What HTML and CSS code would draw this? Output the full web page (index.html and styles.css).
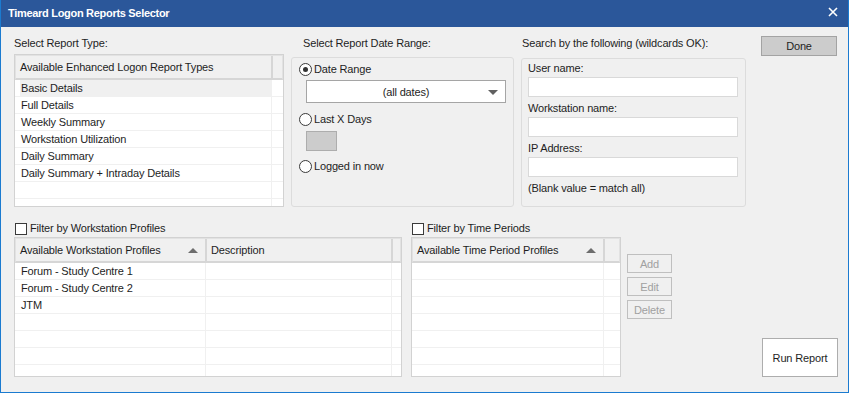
FILE: index.html
```html
<!DOCTYPE html>
<html lang="en">
<head>
    <meta charset="UTF-8">
    <title>Timeard Logon Reports Selector</title>
    <link rel="stylesheet" href="styles.css">
</head>
<body>
    <div class="window">
        <div class="titlebar">
            <span class="title">Timeard Logon Reports Selector</span>
            <svg class="close" width="10" height="10" viewBox="0 0 10 10">
                <path d="M1 1 L9 9 M9 1 L1 9" stroke="#ffffff" stroke-width="1.6" fill="none"/>
            </svg>
        </div>

        <div class="content">
            <div class="top-row">
                <!-- report type -->
                <div class="report-type">
                    <div class="label">Select Report Type:</div>
                    <div class="listview types">
                        <div class="lv-header">
                            <div class="hcell c-type">Available Enhanced Logon Report Types</div>
                            <div class="hcell filler"></div>
                        </div>
                        <div class="lv-row selected"><div class="cell c-type">Basic Details</div><div class="cell filler"></div></div>
                        <div class="lv-row"><div class="cell c-type">Full Details</div><div class="cell filler"></div></div>
                        <div class="lv-row"><div class="cell c-type">Weekly Summary</div><div class="cell filler"></div></div>
                        <div class="lv-row"><div class="cell c-type">Workstation Utilization</div><div class="cell filler"></div></div>
                        <div class="lv-row"><div class="cell c-type">Daily Summary</div><div class="cell filler"></div></div>
                        <div class="lv-row"><div class="cell c-type">Daily Summary + Intraday Details</div><div class="cell filler"></div></div>
                        <div class="lv-row"><div class="cell c-type"></div><div class="cell filler"></div></div>
                        <div class="lv-row"><div class="cell c-type"></div><div class="cell filler"></div></div>
                    </div>
                </div>

                <!-- date range -->
                <div class="date-range">
                    <div class="label indent">Select Report Date Range:</div>
                    <div class="group date-group">
                        <label class="radio-row">
                            <span class="radio checked"></span>
                            <span>Date Range</span>
                        </label>
                        <div class="dropdown">
                            <span>(all dates)</span>
                            <span class="arrow"></span>
                        </div>
                        <label class="radio-row second">
                            <span class="radio"></span>
                            <span>Last X Days</span>
                        </label>
                        <div class="days-box"></div>
                        <label class="radio-row third">
                            <span class="radio"></span>
                            <span>Logged in now</span>
                        </label>
                    </div>
                </div>

                <!-- search -->
                <div class="search">
                    <div class="label tiny-indent">Search by the following (wildcards OK):</div>
                    <div class="group search-group">
                        <div class="field-label">User name:</div>
                        <div class="textbox"></div>
                        <div class="field-label">Workstation name:</div>
                        <div class="textbox"></div>
                        <div class="field-label">IP Address:</div>
                        <div class="textbox"></div>
                        <div class="field-label">(Blank value = match all)</div>
                    </div>
                </div>

                <button type="button" class="btn done">Done</button>
            </div>

            <div class="bottom-row">
                <!-- workstation profiles -->
                <div class="ws-profiles">
                    <label class="check-row">
                        <span class="checkbox"></span>
                        <span>Filter by Workstation Profiles</span>
                    </label>
                    <div class="listview ws">
                        <div class="lv-header">
                            <div class="hcell c-ws">Available Workstation Profiles<span class="sort"></span></div>
                            <div class="hcell c-desc">Description</div>
                            <div class="hcell filler"></div>
                        </div>
                        <div class="lv-row"><div class="cell c-ws">Forum - Study Centre 1</div><div class="cell c-desc"></div><div class="cell filler"></div></div>
                        <div class="lv-row"><div class="cell c-ws">Forum - Study Centre 2</div><div class="cell c-desc"></div><div class="cell filler"></div></div>
                        <div class="lv-row"><div class="cell c-ws">JTM</div><div class="cell c-desc"></div><div class="cell filler"></div></div>
                        <div class="lv-row"><div class="cell c-ws"></div><div class="cell c-desc"></div><div class="cell filler"></div></div>
                        <div class="lv-row"><div class="cell c-ws"></div><div class="cell c-desc"></div><div class="cell filler"></div></div>
                        <div class="lv-row"><div class="cell c-ws"></div><div class="cell c-desc"></div><div class="cell filler"></div></div>
                        <div class="lv-row"><div class="cell c-ws"></div><div class="cell c-desc"></div><div class="cell filler"></div></div>
                    </div>
                </div>

                <!-- time periods -->
                <div class="time-profiles">
                    <label class="check-row">
                        <span class="checkbox"></span>
                        <span>Filter by Time Periods</span>
                    </label>
                    <div class="listview tp">
                        <div class="lv-header">
                            <div class="hcell c-tp">Available Time Period Profiles<span class="sort"></span></div>
                            <div class="hcell filler"></div>
                        </div>
                        <div class="lv-row"><div class="cell c-tp"></div><div class="cell filler"></div></div>
                        <div class="lv-row"><div class="cell c-tp"></div><div class="cell filler"></div></div>
                        <div class="lv-row"><div class="cell c-tp"></div><div class="cell filler"></div></div>
                        <div class="lv-row"><div class="cell c-tp"></div><div class="cell filler"></div></div>
                        <div class="lv-row"><div class="cell c-tp"></div><div class="cell filler"></div></div>
                        <div class="lv-row"><div class="cell c-tp"></div><div class="cell filler"></div></div>
                        <div class="lv-row"><div class="cell c-tp"></div><div class="cell filler"></div></div>
                    </div>
                </div>

                <div class="tp-buttons">
                    <button type="button" class="btn small" disabled>Add</button>
                    <button type="button" class="btn small" disabled>Edit</button>
                    <button type="button" class="btn small" disabled>Delete</button>
                </div>

                <button type="button" class="btn run">Run Report</button>
            </div>
        </div>
    </div>
</body>
</html>
```

FILE: styles.css
```css
body {
    margin: 0;
    padding: 0;
    font-family: "Liberation Sans", Arial, sans-serif;
    font-size: 11px;
    letter-spacing: -0.15px;
    color: #1e1e1e;
    background: #f0f0f0;
}

.window {
    width: 849px;
    height: 393px;
    box-sizing: border-box;
    background: #f0f0f0;
    border: 1px solid #1b7bd0;
    border-top: none;
    overflow: hidden;
}

.titlebar {
    height: 27px;
    margin: 0 -1px;
    background: #2b579a;
    display: flex;
    align-items: center;
    justify-content: space-between;
    padding: 0 11px 0 8px;
}

.titlebar .title {
    color: #ffffff;
    font-weight: bold;
    font-size: 11px;
    letter-spacing: -0.3px;
    margin-top: -1px;
}

.titlebar .close {
    margin-top: -4px;
}

.content {
    padding: 9px 0 0 13px;
}

.label {
    line-height: 15px;
    height: 15px;
    white-space: nowrap;
}

.label.indent {
    padding-left: 12px;
}

.label.tiny-indent {
    padding-left: 1px;
}

/* ---------- top row ---------- */

.top-row {
    display: flex;
    align-items: flex-start;
}

.report-type {
    width: 270px;
}

.report-type .label {
    margin-bottom: 3px;
}

.date-range {
    width: 223px;
    margin-left: 7px;
}

.date-range .label {
    margin-bottom: 6px;
}

.search {
    width: 225px;
    margin-left: 7px;
}

.search .label {
    margin-bottom: 7px;
}

.group {
    box-sizing: border-box;
    border: 1px solid #dcdcdc;
    border-radius: 3px;
}

.date-group {
    height: 150px;
    padding: 4px 7px 0 14px;
}

.radio-row {
    display: flex;
    align-items: center;
    height: 15px;
    line-height: 15px;
    margin-left: -7px;
}

.radio-row.second {
    margin-top: 9px;
}

.radio-row.third {
    margin-top: 8px;
}

.radio {
    width: 13px;
    height: 13px;
    box-sizing: border-box;
    border: 1px solid #3a3a3a;
    border-radius: 50%;
    background: #fff;
    margin-right: 2px;
    display: flex;
    align-items: center;
    justify-content: center;
}

.radio.checked::after {
    content: "";
    width: 5px;
    height: 5px;
    border-radius: 50%;
    background: #333;
}

.dropdown {
    width: 200px;
    height: 23px;
    box-sizing: border-box;
    margin-top: 3px;
    border: 1px solid #a5a5a5;
    background: #fff;
    display: flex;
    align-items: center;
    justify-content: center;
    position: relative;
}

.dropdown .arrow {
    position: absolute;
    right: 7px;
    top: 9px;
    width: 0;
    height: 0;
    border-left: 5px solid transparent;
    border-right: 5px solid transparent;
    border-top: 5px solid #606060;
}

.days-box {
    width: 31px;
    height: 20px;
    box-sizing: border-box;
    margin-top: 4px;
    background: #cccccc;
    border: 1px solid #adadad;
}

.search-group {
    height: 149px;
    padding: 2px 6px 0 6px;
}

.field-label {
    line-height: 15px;
    height: 15px;
    margin-bottom: 1px;
}

.textbox {
    width: 210px;
    height: 20px;
    box-sizing: border-box;
    border: 1px solid #d9d9d9;
    background: #fff;
    margin-bottom: 4px;
}

.btn {
    font-family: "Liberation Sans", Arial, sans-serif;
    font-size: 11px;
    letter-spacing: -0.15px;
    color: #1e1e1e;
    box-sizing: border-box;
    padding: 0;
    border: 1px solid #adadad;
    background: #e1e1e1;
}

.done {
    width: 76px;
    height: 20px;
    margin-left: 15px;
    background: #cccccc;
    border-color: #a3a3a3;
}

/* ---------- list views ---------- */

.listview {
    box-sizing: border-box;
    border: 1px solid #d2d2d2;
    background: #fff;
    overflow: hidden;
}

.listview.types {
    height: 153px;
}

.lv-header {
    display: flex;
    height: 25px;
    box-sizing: border-box;
    background: #f0f0f0;
    border: 1px solid #e2e2e2;
    border-bottom: 2px solid #d6d6d6;
}

.hcell {
    box-sizing: border-box;
    height: 100%;
    display: flex;
    align-items: center;
    padding-left: 4px;
    border-right: 2px solid #d6d6d6;
    white-space: nowrap;
    position: relative;
}

.hcell.filler {
    flex: 1;
    border-right: none;
    padding: 0;
}

.lv-row {
    display: flex;
    height: 17px;
    box-sizing: border-box;
    border-bottom: 1px solid #f0f0f0;
}

.cell {
    box-sizing: border-box;
    height: 100%;
    line-height: 16px;
    padding-left: 6px;
    border-right: 1px solid #f0f0f0;
    white-space: nowrap;
}

.cell.filler {
    flex: 1;
    border-right: none;
}

.lv-row.selected .c-type {
    background: #f0f0f0;
    margin-left: 5px;
    padding-left: 1px;
    width: 252px;
}

.c-type {
    width: 257px;
}

.c-ws {
    width: 191px;
}

.c-desc {
    width: 186px;
}

.c-tp {
    width: 192px;
}

.sort {
    position: absolute;
    right: 7px;
    top: 9px;
    width: 0;
    height: 0;
    border-left: 5px solid transparent;
    border-right: 5px solid transparent;
    border-bottom: 5px solid #6d6d6d;
}

/* ---------- bottom row ---------- */

.bottom-row {
    display: flex;
    align-items: flex-start;
    margin-top: 14px;
}

.check-row {
    display: flex;
    align-items: center;
    height: 15px;
    line-height: 15px;
    margin-bottom: 1px;
}

.checkbox {
    width: 12px;
    height: 12px;
    box-sizing: border-box;
    border: 1px solid #3a3a3a;
    background: #fff;
    margin-left: 1px;
    margin-right: 3px;
}

.ws-profiles {
    width: 388px;
}

.listview.ws,
.listview.tp {
    height: 140px;
}

.time-profiles {
    width: 210px;
    margin-left: 9px;
}

.tp-buttons {
    display: flex;
    flex-direction: column;
    gap: 4px;
    margin-left: 6px;
    margin-top: 33px;
}

.btn.small {
    width: 45px;
    height: 19px;
    background: #f0f0f0;
    border-color: #bfbfbf;
    color: #a0a0a0;
}

.run {
    width: 76px;
    height: 39px;
    margin-left: 90px;
    margin-top: 117px;
    background: #ffffff;
}
```
